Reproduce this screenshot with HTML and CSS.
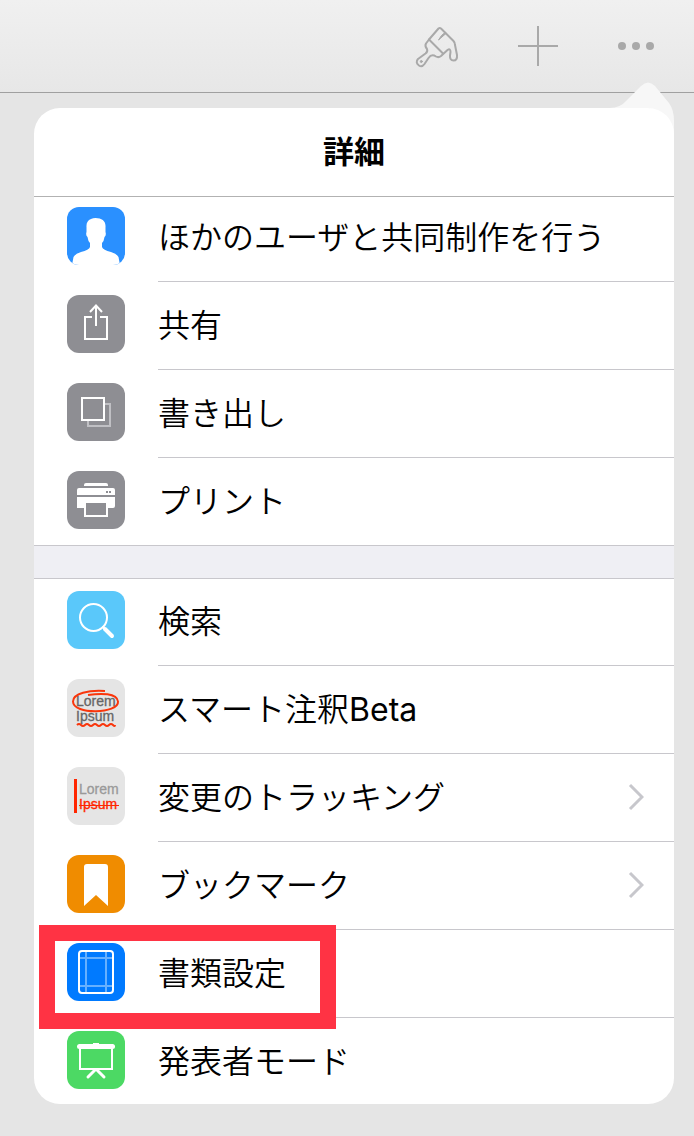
FILE: index.html
```html
<!DOCTYPE html>
<html lang="ja">
<head>
    <meta charset="UTF-8">
    <meta name="viewport" content="width=device-width, initial-scale=1.0">
    <title>詳細</title>
    <link rel="stylesheet" href="styles.css">
</head>
<body>
    <header class="toolbar">
        <button class="tool-button" aria-label="フォーマット">
            <svg width="44" height="44" viewBox="3 0 44 44" fill="none" stroke="#a9a9a9" stroke-width="2" stroke-linejoin="round" stroke-linecap="round">
                <path d="M23.500 4.500Q24.700 3.500 26 4.500L38.500 17Q40 18.500 40 21L42 31Q42.500 36.500 38.500 36.500Q34.700 36.500 35 31.500L35.500 28Q35.500 24 32.500 26L26 32Q23.500 34 21 32.500Q16.500 29.500 13.500 34L9.500 40Q7 43.500 4 41.500Q0 38.500 3 35L10.500 29.500Q13 27.500 12 25Q9.500 22 11 19.500L14 15.500L23.500 4.500Z" />
                <path d="M14 15.500L28 29.500" />
                <path stroke-width="1" fill="#a9a9a9" d="M30 8.500L26.500 11.500L23.500 16L31 9.500Z" />
                <circle cx="6.300" cy="37.500" r="1" fill="#a9a9a9" stroke-width="1" />
            </svg>
        </button>
        <button class="tool-button" aria-label="追加">
            <svg width="44" height="44" viewBox="0 0 44 44" stroke="#a9a9a9" stroke-width="2">
                <path d="M22 2V42M2 22H42" />
            </svg>
        </button>
        <button class="tool-button" aria-label="詳細">
            <svg width="44" height="44" viewBox="0 0 44 44" fill="#a9a9a9">
                <circle cx="8" cy="22" r="4" />
                <circle cx="22" cy="22" r="4" />
                <circle cx="36" cy="22" r="4" />
            </svg>
        </button>
    </header>

    <main class="popover">
        <svg class="popover-arrow" width="64" height="64" viewBox="0 0 64 64" fill="#f7f7f7">
            <path d="M0 27Q10 27 16 20L31 5Q38 -2 45 5L59 22Q64 29 64 40V64H40V27Z" />
        </svg>
        <div class="panel">
            <h1 class="title">詳細</h1>

            <div class="menu-list">
                <div class="menu">
                    <button class="menu-item">
                        <svg class="icon icon-user" viewBox="0 0 58 58">
                            <path fill="#fff" d="M28.500 11C35 11 39 14 38.500 20V25Q39.500 28 37.500 30Q37 34 35 36V40Q36 43 44 45Q50 47 51.500 50L53 58H5L6.500 50Q8 47 14 45Q22 43 23 40V36Q21 34 20.500 30Q18.500 28 19.500 25V20Q19 14 24 12Q26 11 28.500 11Z" />
                        </svg>
                        <span class="label">ほかのユーザと共同制作を行う</span>
                    </button>
                    <button class="menu-item">
                        <svg class="icon icon-gray" viewBox="0 0 58 58" fill="none" stroke="#fff" stroke-width="2">
                            <path d="M25 22H18V44H40V22H33M29 31V11M23 17L29 10.500L35 17" />
                        </svg>
                        <span class="label">共有</span>
                    </button>
                    <button class="menu-item">
                        <svg class="icon icon-gray" viewBox="0 0 58 58" fill="none" stroke="#fff" stroke-width="2">
                            <path stroke="#c0c0c4" d="M38 21H43V43H21V38" />
                            <path d="M15 15H37V37H15Z" />
                        </svg>
                        <span class="label">書き出し</span>
                    </button>
                    <button class="menu-item">
                        <svg class="icon icon-gray" viewBox="0 0 58 58">
                            <path fill="#fff" d="M17 15V14Q17 12 19 12H39Q41 12 41 14V15ZM10 24V19Q10 17 12 17H46Q48 17 48 19V24ZM10 26H48V35Q48 37 46 37H10Z" />
                            <path fill="#8e8e93" d="M39 20h2v2h-2zM42 20h2v2h-2z" />
                            <path fill="#8e8e93" stroke="#fff" stroke-width="2" d="M18 31H40V45H18Z" />
                        </svg>
                        <span class="label">プリント</span>
                    </button>
                </div>

                <div class="menu">
                    <button class="menu-item">
                        <svg class="icon icon-search" viewBox="0 0 58 58" fill="none" stroke="#fff" stroke-linecap="round">
                            <circle cx="26.500" cy="26.500" r="13.500" stroke-width="2" />
                            <path stroke-width="2" d="M36 36L38 38" />
                            <path stroke-width="4" d="M38 38L45 45" />
                        </svg>
                        <span class="label">検索</span>
                    </button>
                    <button class="menu-item">
                        <svg class="icon icon-light" viewBox="0 0 58 58">
                            <text class="icon-text" x="9" y="27">Lorem</text>
                            <text class="icon-text" x="9" y="42">Ipsum</text>
                            <g fill="none" stroke="#f9360c" stroke-width="2">
                                <path d="M38 12C22 11 6 14 6 22.500C6 36 52 35 51 22.500C50 14 34 14 21 16" />
                                <path d="M10 46q2-2 4 0t4 0t4 0t4 0t4 0t4 0t4 0t4 0t4 0t2 0" />
                            </g>
                        </svg>
                        <span class="label"><span>スマート注釈<span class="latin">Beta</span></span></span>
                    </button>
                    <button class="menu-item">
                        <svg class="icon icon-light" viewBox="0 0 58 58">
                            <path fill="#ff2600" d="M7 12h3v34H7z" />
                            <text class="icon-text icon-text-pale" x="12" y="27">Lorem</text>
                            <text class="icon-text icon-text-red" x="12" y="42">Ipsum</text>
                            <path stroke="#ff2600" stroke-width="1" d="M12 38.500H52" />
                        </svg>
                        <span class="label">
                            変更のトラッキング
                            <svg class="chevron" viewBox="0 0 16 28"><path d="M2 2L14 14L2 26" /></svg>
                        </span>
                    </button>
                    <button class="menu-item">
                        <svg class="icon icon-bookmark" viewBox="0 0 58 58">
                            <path fill="#fff" d="M17 51V12Q17 9 20 9H38Q41 9 41 12V51L29 40Z" />
                        </svg>
                        <span class="label">
                            ブックマーク
                            <svg class="chevron" viewBox="0 0 16 28"><path d="M2 2L14 14L2 26" /></svg>
                        </span>
                    </button>
                    <button class="menu-item highlighted">
                        <svg class="icon icon-document" viewBox="0 0 58 58" fill="none" stroke="#fff" stroke-width="2">
                            <path stroke="#66b0ff" d="M19 9V50M39 9V50M12 15H46M12 43H46" />
                            <rect x="12" y="8" width="34" height="42" rx="3" />
                        </svg>
                        <span class="label">書類設定</span>
                    </button>
                    <button class="menu-item">
                        <svg class="icon icon-presenter" viewBox="0 0 58 58" fill="none" stroke="#fff" stroke-width="2">
                            <path d="M13 17V38H45V17" />
                            <path stroke-width="5" stroke-linecap="round" d="M12.500 15.500H45.500" />
                            <path d="M26 13H32" />
                            <path stroke-width="3" stroke-linecap="round" d="M28 39L21 46M30 39L37 46" />
                        </svg>
                        <span class="label">発表者モード</span>
                    </button>
                </div>
            </div>
        </div>
    </main>
</body>
</html>
```
FILE: styles.css
```css
*, *::after {
    box-sizing: border-box;
}

body {
    margin: 0;
    min-height: 100vh;
    background-color: #e5e5e5;
    color: black;
    font-family: Inter, "Noto Sans CJK JP", sans-serif;
}

button {
    border: none;
    padding: 0;
    background-color: transparent;
    color: inherit;
    font: inherit;
    cursor: pointer;
}

.toolbar {
    display: flex;
    justify-content: flex-end;
    align-items: center;
    gap: 54px;
    height: 93px;
    padding-right: 36px;
    border-bottom: 1px solid #a0a0a0;
    background: linear-gradient(#f0f0f0, #e7e7e7);
}

.tool-button svg {
    display: block;
    overflow: visible;
}

.popover {
    position: relative;
    margin: 15px 20px 32px 34px;
}

.popover-arrow {
    position: absolute;
    top: -27px;
    right: 0;
}

.panel {
    position: relative;
    overflow: hidden;
    border-radius: 26px;
    background-color: white;
}

.title {
    margin: 0;
    height: 89px;
    border-bottom: 1px solid #b2b2b2;
    font-size: 31px;
    font-weight: bold;
    line-height: 88px;
    text-align: center;
}

/* the list is scrolled a little, so its first row is cut at the top */
.menu-list {
    margin-top: -3px;
    margin-bottom: -2px;
}

.menu {
    border-bottom: 32px solid #efeff4;
    box-shadow: inset 0 -1px #c8c7cc;
}

.menu:last-child {
    border-bottom: none;
    box-shadow: inset 0 1px #c8c7cc;
}

.menu-item {
    position: relative;
    display: flex;
    align-items: center;
    width: 100%;
    height: 88px;
    padding-left: 33px;
    font-size: 32px;
    font-weight: 350;
    text-align: left;
}

.icon {
    flex: none;
    width: 58px;
    height: 58px;
    margin-right: 33px;
    margin-bottom: 4px;
    border-radius: 12px;
}

.label {
    display: flex;
    flex: 1;
    justify-content: space-between;
    align-items: center;
    height: 88px;
    padding-right: 30px;
    border-bottom: 1px solid #c8c7cc;
    line-height: 87px;
    white-space: nowrap;
}

.latin {
    font-weight: 400;
}

.menu-item:last-child .label {
    border-bottom-color: transparent;
}

/* red frame round the document settings row */
.highlighted::after {
    content: "";
    position: absolute;
    top: -5px;
    left: 5px;
    z-index: 1;
    width: 297px;
    height: 104px;
    border: 16px solid #ff3344;
}

.chevron {
    width: 16px;
    height: 28px;
    margin-bottom: 2px;
    fill: none;
    stroke: #c7c7cc;
    stroke-width: 3;
}

.icon-user {
    background-color: #2a90ff;
}

.icon-gray {
    background-color: #8e8e93;
}

.icon-search {
    background-color: #5ac8fa;
}

.icon-light {
    background-color: #e5e5e5;
}

.icon-bookmark {
    background-color: #f08c00;
}

.icon-document {
    background-color: #007aff;
}

.icon-presenter {
    background-color: #4cd964;
}

.icon-text {
    fill: #666;
    stroke: #666;
    stroke-width: 0.3px;
    font-family: "Liberation Sans", sans-serif;
    font-size: 14px;
    font-weight: normal;
}

.icon-text-pale {
    fill: #999;
    stroke: #999;
}

.icon-text-red {
    fill: #ff2600;
    stroke: #ff2600;
}
```
